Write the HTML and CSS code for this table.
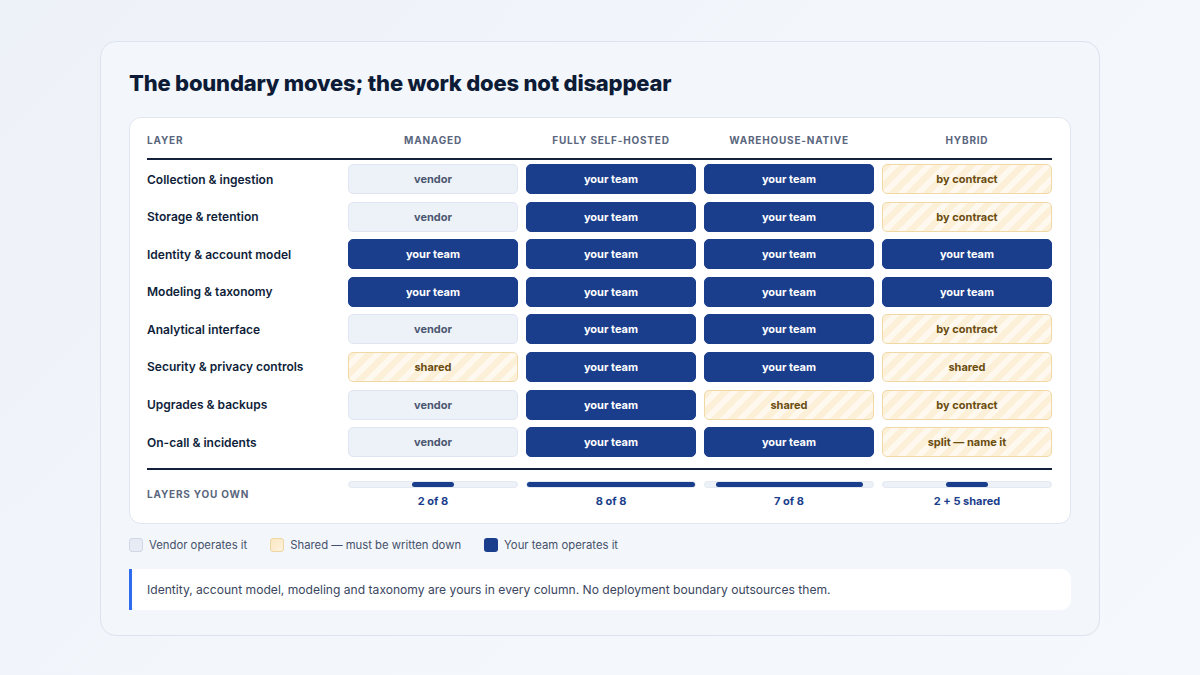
FILE: index.html
```html
<!DOCTYPE html>
<html lang="en">
<head>
<meta charset="utf-8">
<title>Boundary</title>
<link rel="stylesheet" href="styles.css">
</head>
<body>
<div class="panel">
  <h1 class="title">The boundary moves; the work does not disappear</h1>
  <div class="table-card">
    <div class="grid head">
      <div class="hl left">Layer</div>
      <div class="hl">Managed</div>
      <div class="hl">Fully self-hosted</div>
      <div class="hl">Warehouse-native</div>
      <div class="hl">Hybrid</div>
    </div>
    <div class="rule"></div>
    <div class="grid body">
      <div class="label">Collection &amp; ingestion</div>
      <div class="cell v">vendor</div><div class="cell t">your team</div><div class="cell t">your team</div><div class="cell s">by contract</div>
      <div class="label">Storage &amp; retention</div>
      <div class="cell v">vendor</div><div class="cell t">your team</div><div class="cell t">your team</div><div class="cell s">by contract</div>
      <div class="label">Identity &amp; account model</div>
      <div class="cell t">your team</div><div class="cell t">your team</div><div class="cell t">your team</div><div class="cell t">your team</div>
      <div class="label">Modeling &amp; taxonomy</div>
      <div class="cell t">your team</div><div class="cell t">your team</div><div class="cell t">your team</div><div class="cell t">your team</div>
      <div class="label">Analytical interface</div>
      <div class="cell v">vendor</div><div class="cell t">your team</div><div class="cell t">your team</div><div class="cell s">by contract</div>
      <div class="label">Security &amp; privacy controls</div>
      <div class="cell s">shared</div><div class="cell t">your team</div><div class="cell t">your team</div><div class="cell s">shared</div>
      <div class="label">Upgrades &amp; backups</div>
      <div class="cell v">vendor</div><div class="cell t">your team</div><div class="cell s">shared</div><div class="cell s">by contract</div>
      <div class="label">On-call &amp; incidents</div>
      <div class="cell v">vendor</div><div class="cell t">your team</div><div class="cell t">your team</div><div class="cell s">split — name it</div>
    </div>
    <div class="rule bottom"></div>
    <div class="grid foot">
      <div class="hl left own">Layers you own</div>
      <div class="tot"><div class="track"><div class="fill" style="width:25%"></div></div><div class="count">2 of 8</div></div>
      <div class="tot"><div class="track"><div class="fill" style="width:100%"></div></div><div class="count">8 of 8</div></div>
      <div class="tot"><div class="track"><div class="fill" style="width:87.5%"></div></div><div class="count">7 of 8</div></div>
      <div class="tot"><div class="track"><div class="fill" style="width:25%"></div></div><div class="count">2 + 5 shared</div></div>
    </div>
  </div>
  <div class="legend">
    <div class="item"><span class="sw sw-v"></span>Vendor operates it</div>
    <div class="item"><span class="sw sw-s"></span>Shared — must be written down</div>
    <div class="item"><span class="sw sw-t"></span>Your team operates it</div>
  </div>
  <div class="note">Identity, account model, modeling and taxonomy are yours in every column. No deployment boundary outsources them.</div>
</div>
</body>
</html>
```

FILE: styles.css
```css
* { box-sizing: border-box; }
html, body { margin: 0; padding: 0; }
body {
  width: 1200px;
  height: 675px;
  background: linear-gradient(135deg, #edf1f8 0%, #f3f6fb 50%, #f5f8fc 100%);
  font-family: Inter, "Noto Sans", sans-serif;
  color: #0f1e3a;
  padding: 41px 100px 0 100px;
}
.panel {
  width: 1000px;
  height: 595px;
  background: #f3f6fb;
  border: 1px solid #dce3ee;
  border-radius: 16px;
  padding: 26px 28px 0 28px;
}
.title {
  margin: 0;
  font-size: 22px;
  font-weight: 800;
  line-height: 30px;
  letter-spacing: -0.2px;
  color: #0d1b36;
}
.table-card {
  margin-top: 19px;
  background: #ffffff;
  border: 1px solid #e1e7f0;
  border-radius: 12px;
  padding: 15px 18px 0 17px;
  height: 407px;
}
.grid {
  display: grid;
  grid-template-columns: 193px repeat(4, 170px);
  column-gap: 8px;
}
.head { height: 25px; align-items: start; }
.hl {
  font-size: 10px;
  font-weight: 700;
  letter-spacing: 0.8px;
  text-transform: uppercase;
  color: #5a667d;
  text-align: center;
  line-height: 14px;
}
.hl.left { text-align: left; }
.rule {
  height: 2px;
  background: #14213d;
}
.body {
  margin-top: 4px;
  grid-auto-rows: 30px;
  row-gap: 7.6px;
}
.label {
  font-size: 12px;
  font-weight: 600;
  color: #0f1e3a;
  display: flex;
  align-items: center;
}
.cell {
  border-radius: 5px;
  font-size: 11px;
  font-weight: 700;
  display: flex;
  align-items: center;
  justify-content: center;
  border: 1px solid transparent;
}
.cell.v {
  background: #edf1f8;
  border-color: #e0e6f1;
  color: #4b5770;
}
.cell.t {
  background: #1a3e8c;
  border-color: #1a3e8c;
  color: #ffffff;
}
.cell.s {
  background: repeating-linear-gradient(135deg, #fdf0d9 0px, #fdf0d9 6px, #fef8ee 6px, #fef8ee 12px);
  border-color: #f1d9a5;
  color: #6a4d10;
}
.rule.bottom { margin-top: 11px; }
.foot { margin-top: 11px; }
.own {
  padding-top: 6px;
  font-size: 10px;
}
.tot { display: flex; flex-direction: column; align-items: center; }
.track {
  width: 100%;
  height: 7px;
  background: #edf1f8;
  border: 1px solid #e3e8f1;
  border-radius: 4px;
  display: flex;
  justify-content: center;
}
.fill {
  height: 100%;
  background: #1a3e8c;
  border-radius: 4px;
}
.count {
  margin-top: 6px;
  font-size: 11px;
  font-weight: 700;
  color: #1a3e8c;
  line-height: 14px;
}
.legend {
  display: flex;
  gap: 23px;
  margin-top: 13px;
  height: 16px;
  align-items: center;
}
.item {
  display: flex;
  align-items: center;
  font-size: 11.3px;
  color: #45516a;
}
.sw {
  width: 14px;
  height: 14px;
  border-radius: 3px;
  margin-right: 6px;
  border: 1px solid transparent;
}
.sw-v { background: #e6ebf4; border-color: #cfd8e6; }
.sw-s { background: linear-gradient(135deg, #fbe8c4, #fdf2dc); border-color: #efd6a1; }
.sw-t { background: #1a3e8c; }
.note {
  margin-top: 16px;
  background: #ffffff;
  border-left: 3px solid #2f6bee;
  border-radius: 0 10px 10px 0;
  height: 41px;
  padding: 0 16px 0 15px;
  display: flex;
  align-items: center;
  font-size: 12.1px;
  color: #3a4660;
}
```
